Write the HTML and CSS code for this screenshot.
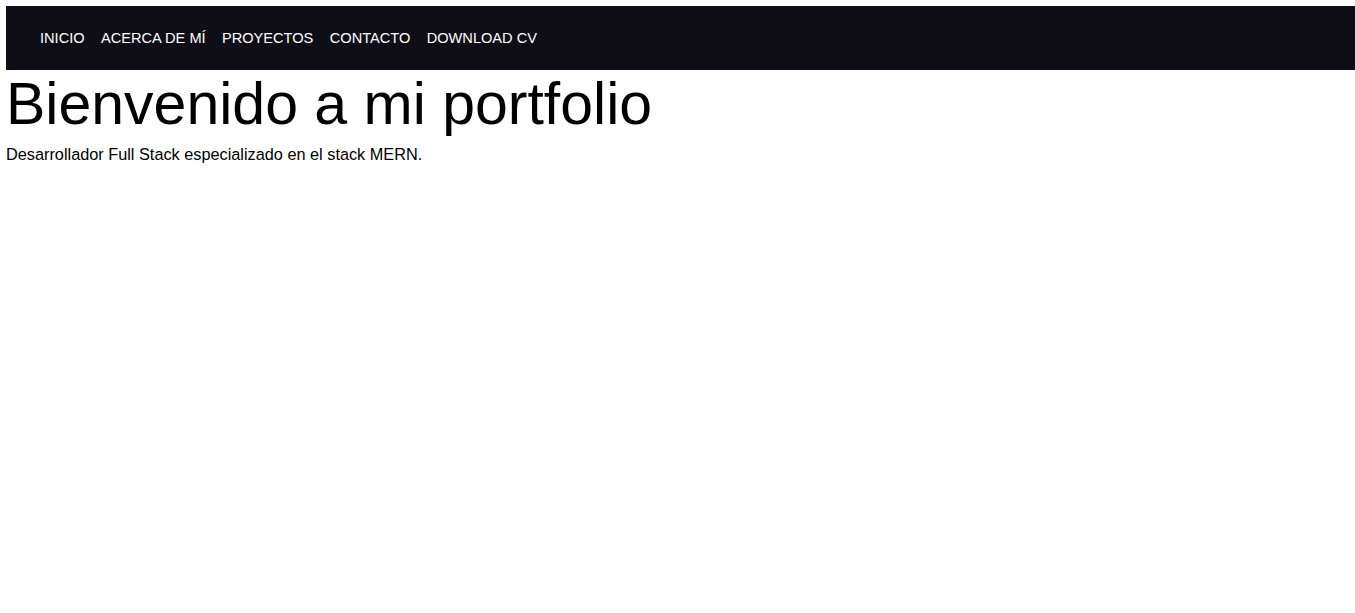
FILE: index.html
```html
<!DOCTYPE html>
<html lang="es">
<head>
<meta charset="utf-8">
<title>Portfolio</title>
<link rel="stylesheet" href="styles.css">
</head>
<body>
<nav class="navbar">
  <ul class="nav-list">
    <li><a href="#inicio">INICIO</a></li>
    <li><a href="#about">ACERCA DE MÍ</a></li>
    <li><a href="#proyectos">PROYECTOS</a></li>
    <li><a href="#contacto">CONTACTO</a></li>
    <li><a href="#cv">DOWNLOAD CV</a></li>
  </ul>
</nav>
<main class="hero">
  <h1 class="hero-title">Bienvenido a mi portfolio</h1>
  <p class="hero-text">Desarrollador Full Stack especializado en el stack MERN.</p>
</main>
</body>
</html>
```
FILE: styles.css
```css
body {
  margin: 6px 0 0 6px;
  font-family: "Liberation Sans", Arial, sans-serif;
  color: #000;
  background: #fff;
}
.navbar {
  background: #0f0e17;
  height: 64px;
  display: flex;
  align-items: center;
  padding-left: 34px;
}
.nav-list {
  list-style: none;
  margin: 0;
  padding: 0;
  display: flex;
  gap: 16.4px;
}
.nav-list a {
  color: #fffffe;
  text-decoration: none;
  font-size: 14.6px;
}
.hero-title {
  font-size: 59px;
  font-weight: normal;
  margin: 0;
}
.hero-text {
  font-size: 16.3px;
  margin: 7px 0 0;
}
```
